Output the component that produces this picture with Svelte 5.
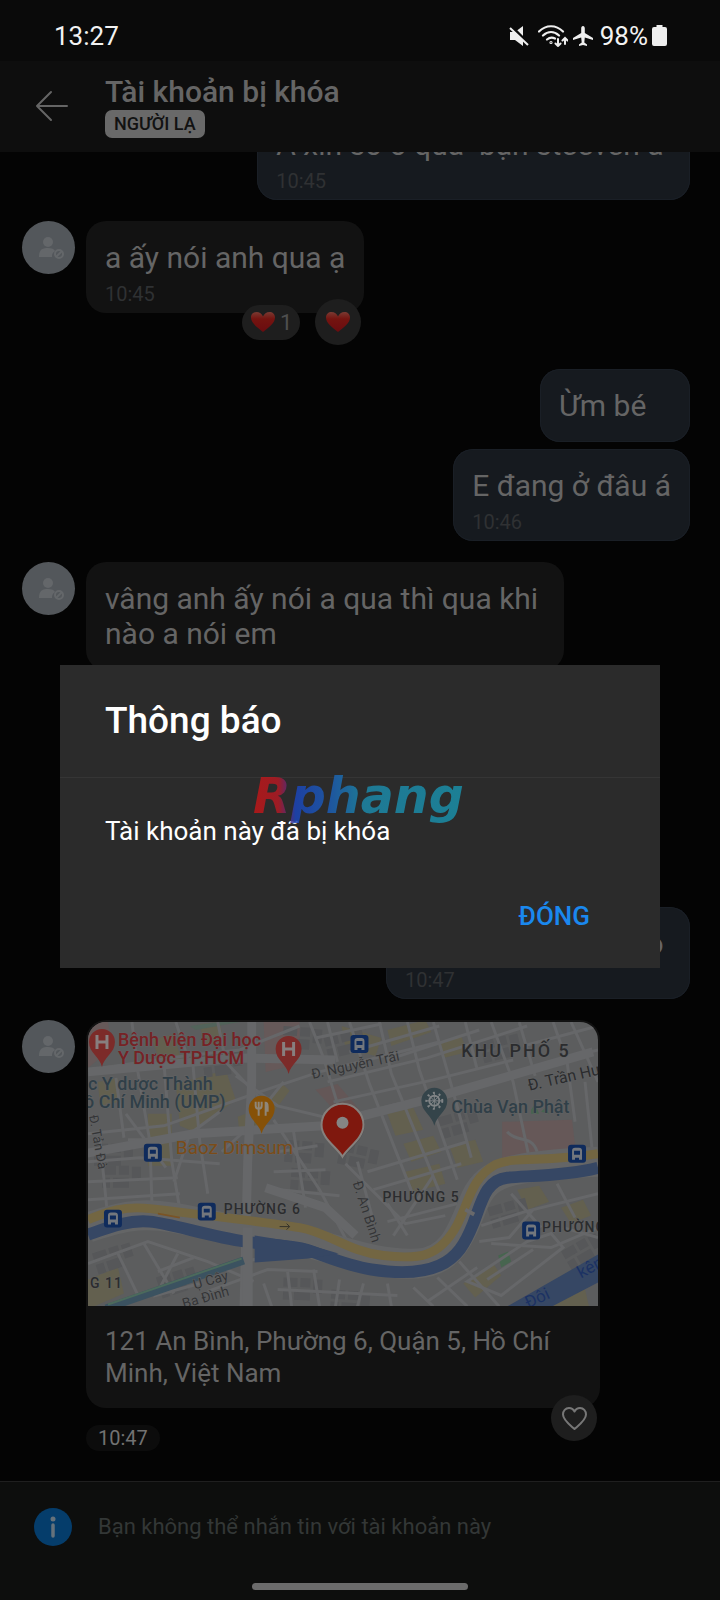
<script>
  let open = $state(true);

  const older = [
    { mine: true, text: "A xin số ở qua\u00a0 bạn steeven á\u00a0", time: "10:45" },
    { mine: false, text: "a ấy nói anh qua ạ", time: "10:45", reactions: 1 },
    { mine: true, text: "Ừm bé" },
    { mine: true, text: "E đang ở đâu á", time: "10:46", close: true },
    { mine: false, text: "vâng anh ấy nói a qua thì qua khi nào a nói em" },
  ];

  // map tile data, in the map's own 511x285 space
  const labels = [
    { x: 30, y: 24, size: 18, kind: "health", text: "Bệnh viện Đại học" },
    { x: 30, y: 42, size: 18, kind: "health", text: "Y Dược TP.HCM" },
    { x: 0, y: 68, size: 18, kind: "school", text: "c Y dược Thành" },
    { x: -4, y: 86, size: 18, kind: "school", text: "ồ Chí Minh (UMP)" },
    { x: 88, y: 132, size: 19, kind: "food", text: "Baoz Dimsum" },
    { x: 364, y: 91, size: 18, kind: "temple", text: "Chùa Vạn Phật" },
    { x: 374, y: 35, size: 18, kind: "area wide", text: "KHU PHỐ 5" },
    { x: 136, y: 192, size: 14, kind: "area", text: "PHƯỜNG 6" },
    { x: 295, y: 180, size: 14, kind: "area", text: "PHƯỜNG 5" },
    { x: 455, y: 210, size: 14, kind: "area", text: "PHƯỜNG" },
    { x: 2, y: 267, size: 14, kind: "area", text: "G 11" },
    { x: 225, y: 57, size: 14, turn: -12, kind: "street", text: "Đ. Nguyễn Trãi" },
    { x: 442, y: 69, size: 16, turn: -13, kind: "street main", text: "Đ. Trần Hưng" },
    { x: 265, y: 161, size: 14, turn: 72, kind: "street", text: "Đ. An Bình" },
    { x: 1, y: 94, size: 13, turn: 80, kind: "street", text: "Đ. Tản Đà" },
    { x: 107, y: 268, size: 14, turn: -16, kind: "street", text: "Ụ Cây" },
    { x: 96, y: 287, size: 14, turn: -16, kind: "street", text: "Bạ Đình" },
    { x: 494, y: 257, size: 17, turn: -28, kind: "canal", text: "kênh" },
    { x: 441, y: 287, size: 17, turn: -25, kind: "canal", text: "Đôi" },
  ];

  const stops = [
    [65, 131], [119, 190], [25, 197], [272, 22], [490, 132], [444, 209],
  ];

  const parks = [
    "M64 18l22-6 8 28-20 4z", "M60 92h24v52H60z", "M88 62l50-14 10 30-42 32-14-6z",
    "M150 95l26-10 18-24 8 8-30 40-20 4z", "M254 4l40 12-6 18-30-8z", "M300 8l38-10 6 12-40 14z",
    "M316 122l30-8 8 16-30 10z", "M300 92l26-6 10 22-28 6z", "M318 150l34-8 6 20-32 8z",
    "M362 124l26-6 8 22-26 6z", "M350 20l24-6 6 16-24 6z", "M0 258l30-12 6 26-30 13H0z",
    "M112 2l20-2 4 20-20 4z", "M430 168l22-4 10 16-22 8z", "M474 186l22-8 8 16-20 8z",
    "M10 60l20-4 2 24-20 4z", "M376 262l30-20 8 12-26 22z", "M468 278l30-10 4 17h-36z",
  ];

  const streets = [
    "M0 48l96-14 56-6 60-24", "M0 112l76-8 96-34 60-20 120-30", "M0 140l52-4 80 6",
    "M0 160l90-4", "M0 178l92-6", "M12 118l8 80", "M28 56l8 60", "M44 0l6 50 12 70 2 60",
    "M76 40l8 100 8 48", "M104 30l8 90 8 52", "M88 0l12 36", "M130 0l8 40 34 36",
    "M40 118h46", "M38 92l40 54", "M132 90l-30 22-16 48", "M148 54l42 30 58 14",
    "M196 60l-40 50-22 20", "M186 98l46 70 32 60", "M190 130l40-6", "M186 150l52-2",
    "M192 168l60 6", "M206 110l12 76", "M222 0l14 36 14 46", "M240 0l10 40",
    "M262 0l20 62 44 112", "M292 0l12 52 48 118", "M320 0l12 48 38 110", "M346 0l16 56 22 80",
    "M378 0l12 48", "M404 0l22 60 16 76", "M432 0l16 54", "M466 0l14 40 8 60",
    "M240 60l100-24 100-32", "M246 80l100-22 80-20", "M252 96l76-18", "M280 150l100-30",
    "M286 168l88-26", "M258 142l60 60 40-8", "M300 200l70-18", "M306 214l40-60",
    "M286 200l-16-60", "M320 214l-20-32", "M228 16l66-14", "M262 30l90-26",
    "M300 38l92-30", "M442 46l69-18", "M436 24l75-20", "M484 0l27 60",
    "M420 110c10 12 24 2 30 20", "M498 60l8 76", "M394 204l44-14 73-18",
    "M392 220l30-4 24-28", "M404 222l60 4 47-20", "M380 260l60-40 24-8 12 14-62 48z",
    "M400 258l46-30", "M424 172l30 34", "M470 162l18 34", "M476 206l35 10",
    "M0 242l60-22 60 20 46 20", "M30 232l22 46", "M56 222l30 50", "M90 232l-22 42 44-12",
    "M70 250l36-14", "M120 270l60-22 50 2", "M176 262l8 23", "M200 250l4 35",
    "M226 248l6 37", "M252 258l-4 27", "M276 262l-6 23", "M300 262l4 23",
    "M190 268l120 6", "M326 266l20 19", "M350 256l30 29", "M372 240l40 45",
    "M340 280l50-34", "M150 240l34-4",
  ];

  const blocks = [
    [6, 122, 0], [14, 144, 0], [198, 118, 4], [204, 146, 4], [236, 16, -14],
    [350, 96, -16], [392, 20, -14], [254, 120, 12], [400, 186, -16], [474, 230, -30],
    [196, 256, 2], [244, 268, 4], [68, 256, -18], [4, 232, -18], [114, 34, -8], [196, 4, 4],
  ];
</script>

{#snippet avatar()}
  <svg class="avatar" viewBox="0 0 53 53" aria-hidden="true">
    <circle cx="26" cy="21" r="5" />
    <path d="M17 36c0-8 4-9 9-9 4 0 6 1 7 3-3 2-3 4-3 6z" />
    <circle class="ban" cx="37" cy="33" r="4" />
    <path class="ban" d="M34 36l6-6" />
  </svg>
{/snippet}

{#snippet heart()}
  <svg class="heart" viewBox="0 0 26 22" aria-hidden="true">
    <path d="M13 21C7 16 1 12 1 6.500C1 3 3.500 1 6.500 1 9.500 1 12 3 13 5.500 14 3 16.500 1 19.500 1 22.500 1 25 3 25 6.500 25 12 19 16 13 21z" fill="url(#heartRed)" />
  </svg>
{/snippet}

<svg class="defs" width="0" height="0" aria-hidden="true">
  <defs>
    <linearGradient id="heartRed" x1="0" y1="0" x2="0" y2="1">
      <stop offset="0" stop-color="#7a3a32" />
      <stop offset="0.350" stop-color="#741410" />
      <stop offset="1" stop-color="#6a0c10" />
    </linearGradient>
  </defs>
</svg>

<div class="screen">
  <div class="status">
    <span class="clock">13:27</span>
    <svg width="20" height="20" viewBox="0 0 20 20" aria-label="Tắt tiếng">
      <path d="M1 6h5l8-6v20l-8-6H1z" fill="#eee" />
      <path d="M1 -1l20 20" stroke="#0a0a0a" stroke-width="3" />
      <path d="M1 2l18 17" stroke="#eee" stroke-width="2" />
    </svg>
    <svg class="wifi" width="30" height="22" viewBox="0 0 30 22" fill="none" stroke="#eee" stroke-width="2.200" stroke-linecap="round" aria-label="Wi-Fi">
      <path d="M1 6.500c7-7 17-7 24 0M5 10.500c5-4.500 11-4.500 16 0M9 14.500c3-2.500 5-2.500 8-1" />
      <circle cx="13" cy="17.500" r="0.500" />
      <path d="M20 14v7M17.500 18.500L20 21l2.500-2.500M27 19v-6M24.500 15.500L27 13l2.500 2.500" stroke-width="2" />
    </svg>
    <svg width="22" height="22" viewBox="0 0 22 22" fill="#eee" aria-label="Chế độ máy bay">
      <path d="M11 1c1.200 0 1.800 1.200 1.800 2.500V8l8.200 5v2l-8.200-2.500-.5 5 2.700 2V21l-4-1-4 1v-1.500l2.700-2-.5-5L1 15v-2l8.200-5V3.500C9.200 2.200 9.800 1 11 1z" />
    </svg>
    <span class="percent">98%</span>
    <svg width="15" height="21" viewBox="0 0 15 21" fill="#eee" aria-hidden="true">
      <path d="M4.500 0h6v2H13a2 2 0 0 1 2 2v15a2 2 0 0 1-2 2H2a2 2 0 0 1-2-2V4a2 2 0 0 1 2-2h2.500z" />
    </svg>
  </div>

  <header class="header">
    <button class="back" aria-label="Quay lại">
      <svg width="34" height="32" viewBox="0 0 34 32" fill="none" stroke="#656565" stroke-width="2" stroke-linecap="round" stroke-linejoin="round">
        <path d="M32 16H2M16 2L2 16l14 14" />
      </svg>
    </button>
    <div class="who">
      <h1>Tài khoản bị khóa</h1>
      <span class="badge">NGƯỜI LẠ</span>
    </div>
  </header>

  <main class="chat">
    <div class="older">
      {#each older as message}
        <div class="row" class:mine={message.mine} class:close={message.close}>
          {#if !message.mine}{@render avatar()}{/if}
          <div class="bubble">
            <p>{message.text}</p>
            {#if message.time}<time>{message.time}</time>{/if}
            {#if message.reactions}
              <div class="reactions">
                <span class="count">{@render heart()}{message.reactions}</span>
                <button class="react" aria-label="Thả tim">{@render heart()}</button>
              </div>
            {/if}
          </div>
        </div>
      {/each}
    </div>

    <div class="latest">
      <div class="row mine">
        <div class="bubble long">
          <p>o&nbsp;</p>
          <time>10:47</time>
        </div>
      </div>
      <div class="row">
        {@render avatar()}
        <div class="place">
          <div class="card">
            <svg class="map" viewBox="0 0 511 285" role="img" aria-label="Bản đồ">
              <rect width="511" height="285" fill="#5c5d5e" />
              <path d="M176 0h36v42l-34 8z" fill="#665959" />
              <path d="M0 0h20l4 26L0 46z" fill="#665959" />
              <path d="M228 68l22-6 22 26-20 6z" fill="#645757" />
              <path d="M415 100l70-2 4 34-74 6z" fill="#665858" />
              {#each parks as d}<path {d} fill="#63604f" />{/each}
              <path d="M102 4l30-4h20l-44 8z" fill="#52635a" />
              <path d="M411 234l10-4 3 10-10 6z" fill="#47654f" />
              <path d="M444 88l4-6 4 10h-8zM454 90l4-4 4 6z" fill="#47654f" />

              {#each blocks as [x, y, turn]}
                <g transform="translate({x} {y}) rotate({turn})" fill="#565759">
                  <path d="M0 0h14v9H0zM17 0h10v9H17zM30 1h9v14h-9zM0 12h8v10H0zM11 12h16v10H11z" />
                </g>
              {/each}

              <g class="streets">
                {#each streets as d}<path {d} />{/each}
              </g>
              <g class="avenues">
                <path d="M-4 132l110-20 130-8 110-28 160-46" />
                <path d="M0 50l150-14 98 2" />
                <path d="M164 0v60l-4 80-4 160" />
                <path d="M178 166l60 20 30 28" />
              </g>

              <path class="bank" d="M0 206C30 196 50 190 85 196S180 216 212 220s70 24 118 22c34-2 44-30 56-60s30-38 125-42" />
              <path class="water" d="M0 213C20 206 40 198 62 200s60 15 96 20 46 4 60 8 40 16 66 20 50 4 68-4 26-22 34-42 12-44 34-46 60-2 91-10" />
              <path d="M167 214l50 8 34 10-30 5-54 4z" fill="#364764" />
              <path class="highway" d="M0 198C20 190 36 184 62 187s120 14 150 19 48 24 84 28 56 2 74-31c12-24 14-46 38-60 20-9 46-2 103-11" />
              <path d="M70 192l22 4" stroke="#7a5425" stroke-width="2" />
              <path d="M160 206v79" stroke="#666769" stroke-width="10" />
              <path d="M378 188l9 5" stroke="#69696b" stroke-width="4" />
              <path d="M420 285l91-52v28l-46 24z" fill="#364764" />
              <path d="M18 287l138-48" stroke="#3b5260" stroke-width="8" />
              <path d="M20 283l134-46" stroke="#4c6a5c" stroke-width="2" />
              <path d="M192 205h10m-3-3l3 3-3 3" stroke="#34322a" stroke-width="1" fill="none" />

              {#each stops as [x, y]}
                <g transform="translate({x} {y})">
                  <rect x="-9" y="-9" width="18" height="18" rx="3" fill="#0f2b5c" />
                  <path d="M-5 6v-9q0-3 3-3h4q3 0 3 3v9H2V4h-4v2zM-3-3v4h6v-4z" fill="#73777d" fill-rule="evenodd" />
                </g>
              {/each}

              {#each labels as label}
                <text
                  class={label.kind}
                  font-size={label.size}
                  transform="translate({label.x} {label.y}) rotate({label.turn ?? 0})"
                >{label.text}</text>
              {/each}

              {#each [[14, 20], [201, 27]] as [x, y]}
                <g transform="translate({x} {y})">
                  <path d="M0 25C-2 15-13 11-13 0a13 13 0 0 1 26 0C13 11 2 15 0 25z" fill="#7c2b29" />
                  <path d="M-5-7V7M5-7V7M-5 0H5" stroke="#877f7f" stroke-width="3" />
                </g>
              {/each}
              <g transform="translate(174 87)">
                <path d="M0 25C-2 15-13 11-13 0a13 13 0 0 1 26 0C13 11 2 15 0 25z" fill="#865107" />
                <path d="M-6-7v4q0 3 3 3t3-3v-4M-3-7V7M4 7V-6q2 0 2 4v4H4" stroke="#8f8678" stroke-width="2" fill="none" />
              </g>
              <g transform="translate(347 79)">
                <path d="M0 25C-2 15-13 11-13 0a13 13 0 0 1 26 0C13 11 2 15 0 25z" fill="#34444a" />
                <g fill="none" stroke="#808486">
                  <circle r="5" stroke-width="2" />
                  <circle r="8" stroke-width="2" stroke-dasharray="2 4" />
                  <path d="M0-8V8M-8 0H8M-6-6L6 6M-6 6L6-6" />
                </g>
              </g>
              <g transform="translate(255 103)">
                <path d="M1 33C-6 23-20 14-20 1a21 21 0 0 1 42 0C22 14 8 23 1 33z" fill="#3c3c3c" opacity="0.5" />
                <path d="M0 32C-6 22-21 14-21 0a21 21 0 0 1 42 0C21 14 6 22 0 32z" fill="#7f180e" stroke="#85807d" stroke-width="2" />
                <circle cy="-2" r="6" fill="#858585" />
              </g>
            </svg>
            <p>121 An Bình, Phường 6, Quận 5, Hồ Chí Minh, Việt Nam</p>
            <button class="react like" aria-label="Thích">
              <svg width="27" height="25" viewBox="0 0 27 25" fill="none" stroke="#777" stroke-width="2" stroke-linejoin="round">
                <path d="M13.500 23C9 19 2 14 2 8.500 2 5 4.500 2 8 2c2.500 0 4.500 1.500 5.500 3.500C14.500 3.500 16.500 2 19 2c3.500 0 6 3 6 6.500C25 14 18 19 13.500 23z" />
              </svg>
            </button>
          </div>
          <time class="stamp">10:47</time>
        </div>
      </div>
    </div>
  </main>

  <footer class="footer">
    <div class="notice">
      <svg width="38" height="38" viewBox="0 0 38 38" aria-hidden="true">
        <circle cx="19" cy="19" r="19" fill="#053d6b" />
        <circle cx="19" cy="11" r="2.500" fill="#66727b" />
        <path d="M19 17v11" stroke="#66727b" stroke-width="3.500" stroke-linecap="round" />
      </svg>
      <p>Bạn không thể nhắn tin với tài khoản này</p>
    </div>
    <div class="homebar"></div>
  </footer>

  {#if open}
    <div class="overlay">
      <div class="dialog" role="alertdialog" aria-labelledby="dialog-title">
        <h2 id="dialog-title">Thông báo</h2>
        <div class="body">
          <p>Tài khoản này đã bị khóa</p>
          <button class="dismiss" onclick={() => (open = false)}>ĐÓNG</button>
        </div>
        <svg class="mark" width="224" height="68" viewBox="0 0 224 68" aria-hidden="true">
          <defs>
            <linearGradient id="markFill" gradientUnits="userSpaceOnUse" x1="4" y1="0" x2="216" y2="0">
              <stop offset="0" stop-color="#c01717" />
              <stop offset="0.120" stop-color="#b01a24" />
              <stop offset="0.170" stop-color="#5a2a80" />
              <stop offset="0.200" stop-color="#1b45b8" />
              <stop offset="0.360" stop-color="#1c5cb4" />
              <stop offset="0.520" stop-color="#1c87a8" />
              <stop offset="1" stop-color="#1a8fa8" />
            </linearGradient>
          </defs>
          <text x="4" y="47" fill="url(#markFill)">Rphang</text>
        </svg>
      </div>
    </div>
  {/if}
</div>

<style>
  :global(body) {
    background: #040404;
  }

  .screen {
    position: relative;
    display: flex;
    flex-direction: column;
    min-height: 100vh;
    background: #040404;
    color: #656565;
    font-family: Roboto, "Noto Sans", sans-serif;
  }

  .defs {
    position: absolute;
  }

  h1,
  h2,
  p {
    margin: 0;
    font-weight: 400;
  }

  button {
    padding: 0;
    border: 0;
    background: none;
    color: inherit;
    font: inherit;
    cursor: pointer;
  }

  .status {
    display: flex;
    align-items: center;
    height: 61px;
    padding: 10px 53px 0 54px;
    box-sizing: border-box;
    background: #0a0a0a;
    color: #f2f2f2;
    font-size: 26px;
  }

  .clock {
    flex: 1;
  }

  .wifi {
    margin: 0 4px 0 9px;
  }

  .percent {
    margin: 0 4px 0 6px;
    font-size: 26px;
  }

  .header {
    display: flex;
    align-items: center;
    gap: 36px;
    height: 91px;
    padding: 0 36px 2px 35px;
    background: #0e0e0e;
    box-sizing: border-box;
  }

  .back {
    display: flex;
  }

  .who {
    display: flex;
    flex-direction: column;
    align-items: flex-start;
  }

  h1 {
    font-size: 30px;
    line-height: 36px;
    font-weight: 500;
  }

  .badge {
    padding: 0 9px;
    border-radius: 7px;
    background: #696969;
    color: #121212;
    font-size: 18px;
    line-height: 28px;
    font-weight: 500;
  }

  .chat {
    flex: 1;
    display: flex;
    flex-direction: column;
    justify-content: space-between;
    overflow: hidden;
    padding: 0 30px 30px 22px;
  }

  .older {
    display: flex;
    flex-direction: column;
    gap: 21px;
    margin-top: -44px;
  }

  .latest {
    display: flex;
    flex-direction: column;
    gap: 21px;
  }

  .row {
    display: flex;
    align-items: flex-start;
    gap: 11px;
  }

  .row.mine {
    justify-content: flex-end;
  }

  .row.close {
    margin-top: -14px;
  }

  .avatar {
    flex: none;
    width: 53px;
    height: 53px;
    border-radius: 50%;
    background: #53575b;
    fill: #64676a;
  }

  .avatar .ban {
    fill: #53575b;
    stroke: #64676a;
    stroke-width: 2;
  }

  .bubble {
    position: relative;
    max-width: 440px;
    min-width: 112px;
    padding: 19px;
    border-radius: 20px;
    background: #121212;
    font-size: 30px;
    line-height: 35px;
  }

  .bubble:has(time) {
    padding-bottom: 7px;
  }

  .bubble:has(.reactions) {
    margin-bottom: 35px;
  }

  .mine .bubble {
    background: #161a1f;
    box-shadow: inset 0 0 0 1px #1a1f26;
  }

  .bubble time {
    display: block;
    margin-top: 7px;
    color: #2f3133;
    font-size: 20px;
    line-height: 24px;
  }

  .bubble.long {
    width: 266px;
  }

  .long p {
    text-align: right;
  }

  .reactions {
    position: absolute;
    right: 3px;
    bottom: -32px;
    display: flex;
    align-items: center;
    gap: 15px;
  }

  .heart {
    width: 26px;
    height: 22px;
  }

  .count {
    display: flex;
    align-items: center;
    gap: 4px;
    padding: 0 8px;
    border-radius: 18px;
    background: #1e1e1e;
    color: #4f4f4f;
    font-size: 22px;
    line-height: 35px;
  }

  .react {
    display: flex;
    align-items: center;
    justify-content: center;
    width: 46px;
    height: 46px;
    border-radius: 50%;
    background: #1e1e1e;
  }

  .place {
    display: flex;
    flex-direction: column;
    align-items: flex-start;
    gap: 17px;
    max-width: 514px;
  }

  .card {
    position: relative;
    padding: 2px 2px 19px;
    border-radius: 20px;
    background: #121212;
  }

  .card p {
    padding: 19px 40px 0 17px;
    font-size: 26px;
    line-height: 32px;
  }

  .like {
    position: absolute;
    right: 3px;
    bottom: -33px;
  }

  .map {
    display: block;
    width: 100%;
    border-radius: 18px 18px 0 0;
  }

  .streets path {
    fill: none;
    stroke: #666769;
    stroke-width: 3;
  }

  .avenues path {
    fill: none;
    stroke: #666769;
    stroke-width: 9;
  }

  .bank,
  .water,
  .highway {
    fill: none;
    stroke: #646566;
    stroke-width: 30;
  }

  .water {
    stroke: #364764;
    stroke-width: 12;
  }

  .highway {
    stroke: #736642;
    stroke-width: 9;
  }

  .map text {
    font-weight: 500;
    paint-order: stroke;
    stroke: #626364;
    stroke-width: 1px;
  }

  .map .health {
    fill: #762225;
  }

  .map .school,
  .map .temple {
    fill: #303f48;
  }

  .map .food {
    fill: #7b4c18;
    font-weight: 400;
  }

  .map .area {
    fill: #2b2c2e;
    letter-spacing: 1px;
  }

  .map .wide {
    letter-spacing: 2px;
  }

  .map .street {
    fill: #343537;
    font-weight: 400;
  }

  .map .main {
    fill: #2b2c2e;
  }

  .map .canal {
    fill: #1c3263;
    stroke: none;
    font-weight: 400;
  }

  .stamp {
    padding: 0 12px;
    border-radius: 13px;
    background: #0c0c0c;
    font-size: 20px;
    line-height: 26px;
    color: #727272;
  }

  .footer {
    display: flex;
    flex-direction: column;
    align-items: center;
    border-top: 1px solid #1f1f1f;
    background: #0d0e0d;
    padding-bottom: 10px;
  }

  .notice {
    display: flex;
    align-items: center;
    align-self: stretch;
    gap: 26px;
    padding: 26px 34px 37px;
    color: #333736;
    font-size: 22px;
    line-height: 38px;
  }

  .homebar {
    width: 30%;
    height: 7px;
    border-radius: 4px;
    background: #6b6b6b;
  }

  .overlay {
    position: absolute;
    inset: 0;
    display: flex;
    align-items: center;
    justify-content: center;
    padding: 32px 60px 0;
  }

  .dialog {
    position: relative;
    flex: 1;
    background: #2b2b2b;
    color: #fff;
  }

  h2 {
    padding: 34px 45px;
    border-bottom: 1px solid #353535;
    font-size: 37px;
    line-height: 44px;
    font-weight: 500;
  }

  .body {
    display: flex;
    flex-direction: column;
    padding: 37px 45px 28px;
    font-size: 26px;
    line-height: 32px;
  }

  .dismiss {
    align-self: flex-end;
    margin: 45px 17px 0 0;
    padding: 8px;
    color: #1a88ee;
    font-weight: 500;
  }

  .mark {
    position: absolute;
    top: 101px;
    left: 189px;
    opacity: 0.85;
    pointer-events: none;
  }

  .mark text {
    font-family: "DejaVu Sans", sans-serif;
    font-size: 49px;
    font-weight: 700;
    font-style: italic;
  }
</style>
